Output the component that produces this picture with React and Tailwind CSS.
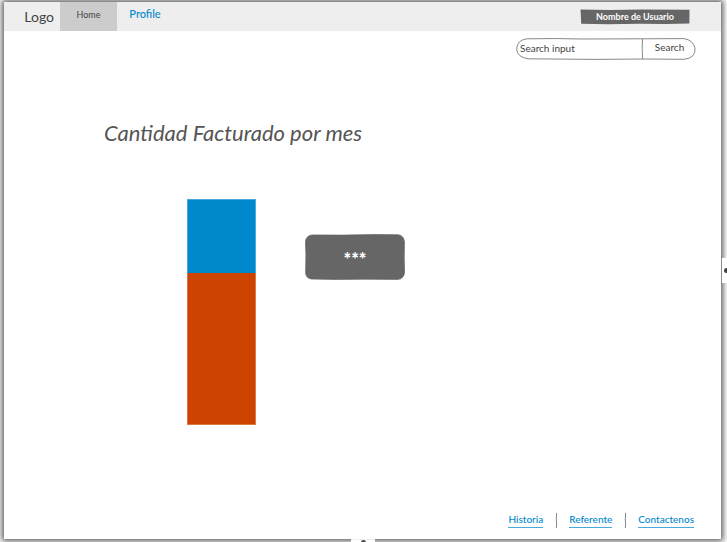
import React from "react";

const bars = [
  { label: "Pendiente", className: "h-[74px] border-b-0 border-[#4aa9dc] bg-[#0088cc]" },
  { label: "Facturado", className: "h-[152px] border-t-0 border-[#dd7744] bg-[#cc4400]" },
];

const links = ["Historia", "Referente", "Contactenos"];

function NavBar() {
  return (
    <header className="flex h-[29px] shrink-0 items-stretch bg-[#eeeeee] pr-[31px]">
      <a href="#logo" className="flex w-14 items-center justify-end pr-1.5 text-[14px] text-[#444444]">
        Logo
      </a>
      <nav className="flex">
        <a href="#home" className="flex w-[57px] items-center justify-center bg-[#cccccc] pb-1 text-[9px] text-[#444444]">
          Home
        </a>
        <a href="#profile" className="flex w-14 items-center justify-center pb-1 text-[11px] font-medium text-[#0088cc]">
          Profile
        </a>
      </nav>
      <button type="button" className="relative ml-auto h-4 w-[110px] self-center text-[9px] leading-3 font-bold text-white">
        <svg viewBox="0 0 110 16" preserveAspectRatio="none" className="absolute inset-0 h-full w-full" aria-hidden="true">
          <path d="M.5 .6 L30 1 L62 .6 L109.5 .8 L109.4 14.6 L86 15 L60 14.8 L28 15.3 L1.2 14.8 L.9 8Z" fill="#666" />
        </svg>
        <span className="relative">Nombre de Usuario</span>
      </button>
    </header>
  );
}

function SearchForm() {
  return (
    <form className="relative mt-[7px] mr-[25px] flex h-[22px] w-[180px] self-end text-[10px] text-[#444444]" onSubmit={(e) => e.preventDefault()}>
      <svg viewBox="0 0 180 22" preserveAspectRatio="none" className="absolute inset-0 h-full w-full" fill="none" stroke="#888" aria-hidden="true">
        <path d="M11 .8 Q40 .2 66 1 L126 .8 L168 .6 Q177 2 179 10 Q180 20 168 21.3 L127 21 L80 21.4 L12 20.8 Q1 19 .7 11 Q1 2 11 .8Z" />
        <path d="M126.5 1 Q125.8 10 126.6 21" />
      </svg>
      <input
        type="text"
        aria-label="Search input"
        placeholder="Search input"
        className="relative w-[127px] bg-transparent pb-0.5 pl-1 outline-none placeholder:text-[#444444]"
      />
      <button type="submit" className="relative flex-1 pb-1">
        Search
      </button>
    </form>
  );
}

function Chart() {
  return (
    <div className="w-[69px]" role="img" aria-label="Cantidad facturada por mes">
      {bars.map((bar) => (
        <div key={bar.label} className={`border ${bar.className}`} />
      ))}
    </div>
  );
}

function MoreButton() {
  return (
    <button type="button" aria-label="Más opciones" className="relative mt-[35px] flex h-[46px] w-[100px] items-center justify-center">
      <svg viewBox="0 0 100 46" preserveAspectRatio="none" className="absolute inset-0 h-full w-full" aria-hidden="true">
        <path
          d="M7 .9 L38 1.1 L70 .5 L93 .7 Q99 1.5 99.5 8 L99.2 23 L99.6 38 Q99 45 93 45.4 L60 45.2 L30 45.5 L6 45 Q1 44 .6 39 L.9 20 L.4 8 Q1 1.5 7 .9Z"
          fill="#666"
          stroke="#666"
          strokeWidth=".7"
        />
      </svg>
      <span className="relative pt-1 text-[18px] leading-5 font-black text-white">***</span>
    </button>
  );
}

function Separator() {
  return (
    <svg viewBox="0 0 4 15" className="h-[15px] w-1" fill="none" stroke="#888" aria-hidden="true">
      <path d="M2.6 0 L2.3 7 L2.6 11 L2.4 15" />
    </svg>
  );
}

function Footer() {
  return (
    <footer className="mt-auto mr-[27px] mb-[11px] flex items-center gap-[11px] self-end text-[10px] leading-3 font-medium text-[#0088cc]">
      {links.map((link, index) => (
        <React.Fragment key={link}>
          {index > 0 && <Separator />}
          <a href={`#${link.toLowerCase()}`} className="border-b border-[#4aa9dc] pb-0.5">
            {link}
          </a>
        </React.Fragment>
      ))}
    </footer>
  );
}

export default function App() {
  return (
    <div className="relative flex h-screen flex-col overflow-hidden bg-white pt-0.5 pr-1.5 pb-[3px] pl-1 font-['Lato','Liberation_Sans',sans-serif]">
      <div className="flex min-h-0 flex-1 flex-col bg-white shadow-[0_0_6px_2px_#555555]">
        <NavBar />
        <SearchForm />
        <main className="px-[100px] pt-[59px]">
          <h1 className="text-[22px] leading-7 text-[#555555] italic">Cantidad Facturado por mes</h1>
          <div className="mt-[52px] ml-[83px] flex items-start gap-[49px]">
            <Chart />
            <MoreButton />
          </div>
        </main>
        <Footer />
      </div>
      <div className="absolute top-[258px] right-0 flex h-[25px] w-[5px] items-center justify-end overflow-hidden bg-white">
        <span className="-mr-0.5 size-[5px] shrink-0 rounded-full bg-[#444444]" />
      </div>
      <div className="absolute bottom-0 left-[351px] flex h-[3px] w-6 items-end justify-center overflow-hidden border-t border-[#eeeeee] bg-white">
        <span className="-mb-[3px] size-[5px] shrink-0 rounded-full bg-[#444444]" />
      </div>
    </div>
  );
}
